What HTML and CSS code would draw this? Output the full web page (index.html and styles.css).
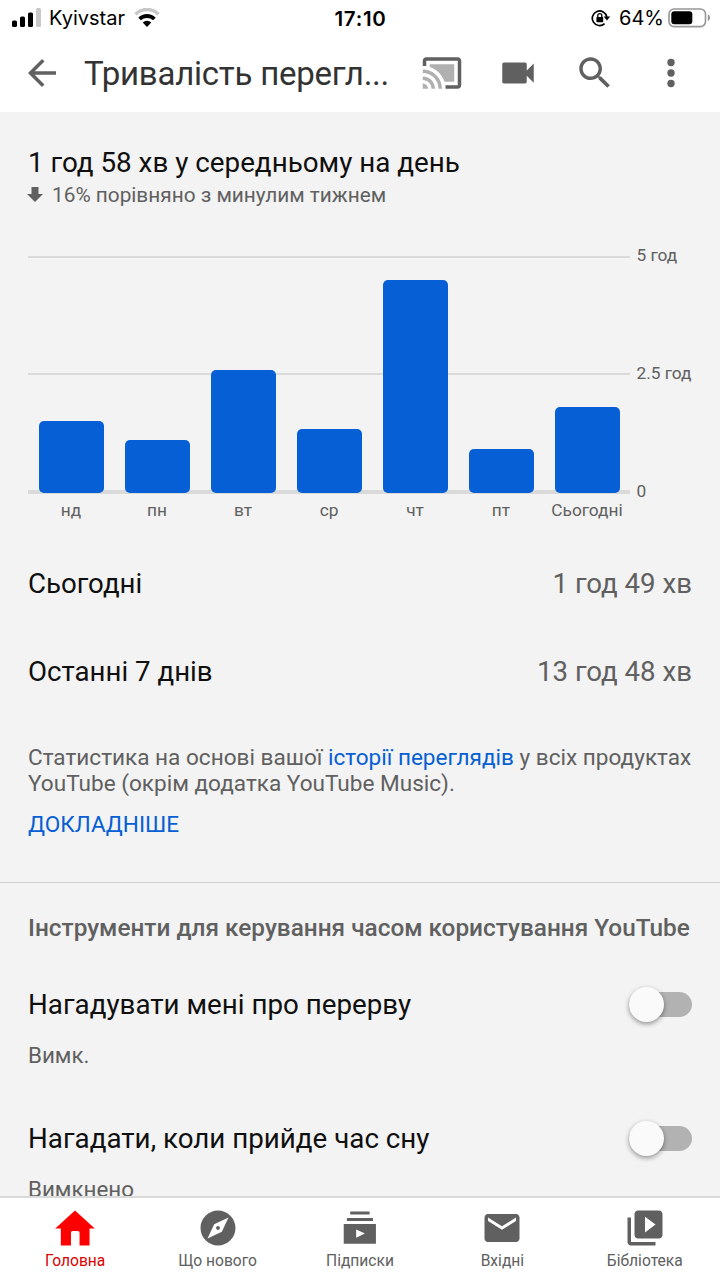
FILE: index.html
```html
<!DOCTYPE html>
<html lang="uk">
<head>
<meta charset="UTF-8" />
<meta name="viewport" content="width=device-width, initial-scale=1" />
<title>Тривалість перегляду</title>
<link rel="stylesheet" href="styles.css">
</head>
<body>

  <!-- Status bar -->
  <div class="status-bar">
    <div class="status-left">
      <svg class="signal" width="30" height="20" viewBox="0 0 30 20">
        <rect x="0" y="12.5" width="5" height="6.500" rx="1.5" />
        <rect x="8" y="8.5" width="5" height="10.500" rx="1.5" />
        <rect x="16" y="4.5" width="5" height="14.500" rx="1.5" />
        <rect x="24" y="0" width="5" height="19" rx="1.5" fill="#c8c8c8" />
      </svg>
      <span class="carrier">Kyivstar</span>
      <svg class="wifi" width="26" height="20" viewBox="0 0 26 20">
        <path d="M1.5 6.2a16.5 16.5 0 0 1 23 0" fill="none" stroke="#c8c8c8" stroke-width="3.6" />
        <path d="M5.6 11a10.6 10.6 0 0 1 14.8 0" fill="none" stroke="#000" stroke-width="3.8" />
        <path d="M13 19l-4.3-4.400a6.200 6.200 0 0 1 8.600 0z" />
      </svg>
    </div>
    <span class="clock">17:10</span>
    <div class="status-right">
      <svg class="lock" width="20" height="18" viewBox="0 0 20 18">
        <path d="M13.6 14.6a7.3 7.3 0 1 1 2.2-6.6" fill="none" stroke="#000" stroke-width="1.7" />
        <path d="M12.6 7.4h6.6L16 11.6z" />
        <rect x="5.4" y="8" width="6.8" height="5.2" rx="0.8" />
        <path d="M6.8 8.4V6.6a2 2 0 0 1 4 0v1.8" fill="none" stroke="#000" stroke-width="1.3" />
      </svg>
      <span class="percent">64%</span>
      <svg class="battery" width="44" height="20" viewBox="0 0 44 20">
        <rect x="1" y="1" width="36.5" height="17.6" rx="5" fill="#fff" stroke="#979797" stroke-width="1.6" />
        <rect x="3.3" y="3.3" width="21" height="13" rx="3" />
        <path d="M39.8 6.6c3 1 3 5.4 0 6.4z" fill="#979797" />
      </svg>
    </div>
  </div>

  <!-- Toolbar -->
  <header class="toolbar">
    <svg class="icon back" viewBox="0 0 24 24"><path d="M20 11H7.83l5.59-5.59L12 4l-8 8 8 8 1.41-1.41L7.83 13H20v-2z" /></svg>
    <h1 class="page-title">Тривалість перегл...</h1>
    <div class="toolbar-actions">
      <svg class="icon" viewBox="0 0 24 24">
        <path d="M21 3H3c-1.1 0-2 .9-2 2v3h2V5h18v14h-7v2h7c1.1 0 2-.9 2-2V5c0-1.1-.9-2-2-2z" />
        <path fill="#b0b0b0" d="M5 7v1.63c3.96 1.28 7.09 4.41 8.37 8.37H19V7H5zM1 18v3h3c0-1.66-1.34-3-3-3zm0-4v2c2.76 0 5 2.24 5 5h2c0-3.87-3.13-7-7-7zm0-4v2c4.97 0 9 4.03 9 9h2c0-6.08-4.93-11-11-11z" />
      </svg>
      <svg class="icon" viewBox="0 0 24 24"><path d="M17 10.5V7c0-.55-.45-1-1-1H4c-.55 0-1 .45-1 1v10c0 .55.45 1 1 1h12c.55 0 1-.45 1-1v-3.5l4 4v-11l-4 4z" /></svg>
      <svg class="icon" viewBox="0 0 24 24"><path d="M15.5 14h-.79l-.28-.27C15.41 12.59 16 11.11 16 9.5 16 5.91 13.09 3 9.5 3S3 5.91 3 9.5 5.91 16 9.5 16c1.61 0 3.09-.59 4.23-1.57l.27.28v.79l5 4.99L20.49 19l-4.99-5zm-6 0C7.01 14 5 11.99 5 9.5S7.01 5 9.5 5 14 7.01 14 9.5 11.99 14 9.5 14z" /></svg>
      <svg class="icon" viewBox="0 0 24 24"><circle cx="12" cy="6" r="2.1" /><circle cx="12" cy="12" r="2.1" /><circle cx="12" cy="18" r="2.1" /></svg>
    </div>
  </header>

  <main class="content">
    <section class="summary">
      <h2 class="average">1 год 58 хв у середньому на день</h2>
      <p class="compare">
        <svg width="16" height="16" viewBox="0 0 16 16"><path d="M4.5 0h7v7H16l-8 8-8-8h4.5z" /></svg>
        <span>16% порівняно з минулим тижнем</span>
      </p>
    </section>

    <!-- Weekly chart -->
    <section class="chart">
      <div class="plot">
        <div class="grid-lines"><span></span><span></span><span class="base"></span></div>
        <div class="bars">
          <div class="bar" style="height:72px"></div>
          <div class="bar" style="height:53px"></div>
          <div class="bar" style="height:122.5px"></div>
          <div class="bar" style="height:63.5px"></div>
          <div class="bar" style="height:212.5px"></div>
          <div class="bar" style="height:44px"></div>
          <div class="bar" style="height:86px"></div>
        </div>
      </div>
      <div class="scale"><span>5 год</span><span>2.5 год</span><span>0</span></div>
      <div class="days">
        <span>нд</span><span>пн</span><span>вт</span><span>ср</span><span>чт</span><span>пт</span><span>Сьогодні</span>
      </div>
    </section>

    <section class="totals">
      <div class="total"><span>Сьогодні</span><span class="value">1 год 49 хв</span></div>
      <div class="total"><span>Останні 7 днів</span><span class="value">13 год 48 хв</span></div>
    </section>

    <section class="about">
      <p>Статистика на основі вашої <a href="#">історії переглядів</a> у всіх продуктах<br>YouTube (окрім додатка YouTube Music).</p>
      <a class="more" href="#">ДОКЛАДНІШЕ</a>
    </section>

    <section class="tools">
      <h3 class="tools-title">Інструменти для керування часом користування YouTube</h3>
      <div class="setting">
        <div class="setting-row"><span>Нагадувати мені про перерву</span><span class="switch"></span></div>
        <p class="state">Вимк.</p>
      </div>
      <div class="setting">
        <div class="setting-row"><span>Нагадати, коли прийде час сну</span><span class="switch"></span></div>
        <p class="state">Вимкнено</p>
      </div>
    </section>
  </main>

  <!-- Bottom navigation -->
  <nav class="bottom-nav">
    <a class="nav-item active" href="#">
      <svg class="icon" viewBox="0 0 24 24"><path d="M12 2L.7 12.3H3.9V22h5.8v-7.3q0-1 1-1h2.9q1 0 1 1V22h5.7v-9.700h3z" /></svg>
      <span>Головна</span>
    </a>
    <a class="nav-item" href="#">
      <svg class="icon" viewBox="0 0 24 24"><path d="M12 10.9c-.61 0-1.1.49-1.1 1.1s.49 1.1 1.1 1.1c.61 0 1.1-.49 1.1-1.1s-.49-1.1-1.1-1.1zM12 2C6.48 2 2 6.48 2 12s4.48 10 10 10 10-4.48 10-10S17.52 2 12 2zm2.19 12.19L6 18l3.81-8.19L18 6l-3.81 8.19z" /></svg>
      <span>Що нового</span>
    </a>
    <a class="nav-item" href="#">
      <svg class="icon" viewBox="0 0 24 24"><path d="M6.4 2.6h11.1v1.7H6.4zM4.5 6.3h14.9V8H4.5zM2.7 9.7h18.4V21H2.7zM9.800 12.900v4.600l5-2.300z" fill-rule="evenodd" /></svg>
      <span>Підписки</span>
    </a>
    <a class="nav-item" href="#">
      <svg class="icon" viewBox="0 0 24 24"><path d="M20 4H4c-1.1 0-1.99.9-1.99 2L2 18c0 1.1.9 2 2 2h16c1.1 0 2-.9 2-2V6c0-1.1-.9-2-2-2zm0 4l-8 5-8-5V6l8 5 8-5v2z" /></svg>
      <span>Вхідні</span>
    </a>
    <a class="nav-item" href="#">
      <svg class="icon" viewBox="0 0 24 24"><path d="M4 6H2v14c0 1.1.9 2 2 2h14v-2H4V6zm16-4H8c-1.1 0-2 .9-2 2v12c0 1.1.9 2 2 2h12c1.1 0 2-.9 2-2V4c0-1.1-.9-2-2-2zm-8 12.5v-9l6 4.5-6 4.5z" /></svg>
      <span>Бібліотека</span>
    </a>
  </nav>

</body>
</html>
```
FILE: styles.css
```css
* { box-sizing: border-box; }
body {
  font-family: Roboto, 'Noto Sans', sans-serif;
  margin: 0;
  height: 1280px;
  display: flex;
  flex-direction: column;
  overflow: hidden;
  background: #fff;
  color: #0f0f0f;
}
h1, h2, h3, p { margin: 0; font-weight: 400; }
a { color: #065fd4; text-decoration: none; }
svg { display: block; flex: none; }
.icon { width: 42px; height: 42px; fill: #606060; }

/* Status bar */
.status-bar {
  height: 36px;
  flex: none;
  display: grid;
  grid-template-columns: 1fr auto 1fr;
  align-items: center;
  padding: 0 8px 0 12px;
  font-family: Inter, sans-serif;
  font-size: 20px;
  color: #000;
}
.status-left, .status-right { display: flex; align-items: center; }
.status-right { justify-content: flex-end; }
.carrier { margin: 0 9px 0 7px; }
.clock { font-weight: 600; font-size: 20.5px; letter-spacing: 0.7px; margin-right: 3px; }
.percent { margin: 0 4px 0 8px; }

/* Toolbar */
.toolbar {
  height: 76px;
  flex: none;
  display: flex;
  align-items: center;
  padding: 0 28px 2px 21px;
}
.page-title {
  margin-left: 21px;
  font-size: 33px;
  letter-spacing: -0.23px;
  white-space: nowrap;
  color: #333;
}
.toolbar-actions { margin-left: auto; display: flex; gap: 34.5px; }

/* Content */
.content {
  flex: 1;
  min-height: 0;
  overflow: hidden;
  background: #f3f3f3;
}
.summary { padding: 33px 28px 0; height: 128px; }
.average { font-size: 27.8px; line-height: 36px; }
.compare {
  display: flex;
  align-items: center;
  gap: 9px;
  font-size: 20.8px;
  line-height: 28px;
  color: #606060;
}
.compare svg { fill: #606060; margin-left: -1px; }

/* Chart */
.chart {
  padding: 0 28px;
  height: 299px;
  display: grid;
  grid-template-columns: 602px 1fr;
  grid-template-rows: 258px 32px;
  color: #606060;
  font-size: 17.3px;
}
.plot { display: grid; height: 254px; padding-top: 16px; }
.grid-lines, .bars { grid-area: 1 / 1; }
.grid-lines { display: flex; flex-direction: column; justify-content: space-between; }
.grid-lines span { height: 2px; background: #dadada; }
.grid-lines .base { height: 4px; }
.bars {
  display: grid;
  grid-template-columns: repeat(7, 1fr);
  justify-items: center;
  align-items: end;
  padding-bottom: 1.5px;
}
.bar { width: 65px; border-radius: 5px; background: #065fd4; }
.scale {
  display: flex;
  flex-direction: column;
  justify-content: space-between;
  padding-left: 6.5px;
  height: 263px;
  padding-top: 3px;
  line-height: 24px;
  white-space: nowrap;
}
.days {
  display: grid;
  grid-template-columns: repeat(7, 1fr);
  text-align: center;
  line-height: 24px;
}

/* Totals */
.total {
  height: 88px;
  display: flex;
  justify-content: space-between;
  align-items: center;
  padding: 0 28px;
  font-size: 27.65px;
}
.total .value { color: #606060; }

/* About */
.about {
  height: 168px;
  padding: 30px 28px 0;
  border-bottom: 1px solid #cfcfcf;
  font-size: 22.57px;
  line-height: 26px;
  color: #606060;
  white-space: nowrap;
}
.more { display: block; margin-top: 15px; }

/* Reminders */
.tools { padding: 0 28px; }
.tools-title {
  padding-top: 29px;
  height: 75px;
  font-size: 24.37px;
  line-height: 32px;
  font-weight: 500;
  color: #606060;
  white-space: nowrap;
}
.setting { height: 134px; padding-top: 26px; }
.setting-row {
  height: 40px;
  display: flex;
  align-items: center;
  justify-content: space-between;
  font-size: 27.75px;
}
.state { margin-top: 17px; font-size: 22.4px; line-height: 28px; color: #606060; }
.switch {
  width: 63px;
  height: 25px;
  display: flex;
  align-items: center;
  border-radius: 13px;
  background: #b2b2b2;
}
.switch::before {
  content: "";
  width: 35px;
  height: 35px;
  border-radius: 50%;
  background: #fafafa;
  box-shadow: 0 2px 5px rgba(0, 0, 0, 0.4);
}

/* Bottom navigation */
.bottom-nav {
  height: 84px;
  flex: none;
  display: grid;
  grid-template-columns: repeat(5, 1fr);
  padding: 9px 4px 0;
  border-top: 2px solid #dadada;
}
.nav-item {
  display: flex;
  flex-direction: column;
  align-items: center;
  font-size: 15.6px;
  line-height: 24px;
  color: #606060;
}
.nav-item.active { color: #d90000; }
.nav-item.active .icon { fill: #f00; }
```
